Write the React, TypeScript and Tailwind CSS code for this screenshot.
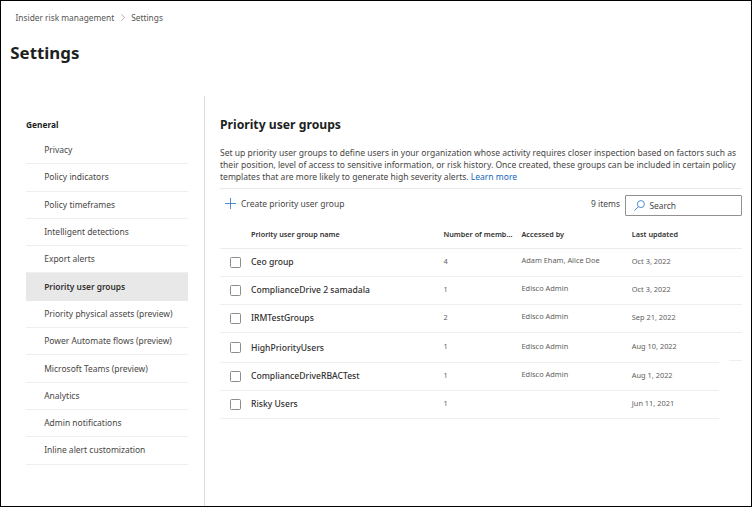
const navItems = [
  "Privacy",
  "Policy indicators",
  "Policy timeframes",
  "Intelligent detections",
  "Export alerts",
  "Priority user groups",
  "Priority physical assets (preview)",
  "Power Automate flows (preview)",
  "Microsoft Teams (preview)",
  "Analytics",
  "Admin notifications",
  "Inline alert customization",
];

type Group = {
  name: string;
  members: number;
  accessedBy: string;
  updated: string;
  size: string;
};

const groups: Group[] = [
  { name: "Ceo group", members: 4, accessedBy: "Adam Eham, Alice Doe", updated: "Oct 3, 2022", size: "h-[28px] w-[522px]" },
  { name: "ComplianceDrive 2 samadala", members: 1, accessedBy: "Edisco Admin", updated: "Oct 3, 2022", size: "h-[28px] w-[522px]" },
  { name: "IRMTestGroups", members: 2, accessedBy: "Edisco Admin", updated: "Sep 21, 2022", size: "h-[28px] w-[522px]" },
  { name: "HighPriorityUsers", members: 1, accessedBy: "Edisco Admin", updated: "Aug 10, 2022", size: "h-[30px] w-[499px] pt-px" },
  { name: "ComplianceDriveRBACTest", members: 1, accessedBy: "Edisco Admin", updated: "Aug 1, 2022", size: "h-[28px] w-[499px]" },
  { name: "Risky Users", members: 1, accessedBy: "", updated: "Jun 11, 2021", size: "h-[28px] w-[499px]" },
];

function Breadcrumb() {
  return (
    <nav className="flex h-3 items-center pl-[14.5px] text-[8.35px] text-[#555453]">
      <span>Insider risk management</span>
      <svg className="mr-[6.5px] mb-px ml-[6.5px] h-[7px] w-1" viewBox="0 0 4 7" fill="none" stroke="#8a8886" strokeWidth="0.7">
        <path d="M0.4 0.3 3.6 3.5 0.4 6.7" />
      </svg>
      <span>Settings</span>
    </nav>
  );
}

function Sidebar() {
  return (
    <aside className="w-[204px] shrink-0 border-r border-[#dcdcdc] pt-[23px] pl-[25px]">
      <div className="h-3 text-[8.35px] leading-3 font-bold text-[#201f1e]">General</div>
      <ul className="mt-[6px] w-[162px]">
        {navItems.map((item) => (
          <li
            key={item}
            className={
              item === "Priority user groups"
                ? "flex h-[27.3px] items-center border-b border-[#e8e8e8] bg-[#e8e8e8] pt-[0.8px] pl-[18.2px] text-[8.35px] font-semibold text-[#323130]"
                : "flex h-[27.3px] items-center border-b border-[#efefef] pt-[0.8px] pl-[18.2px] text-[8.48px] text-[#484644]"
            }
          >
            {item}
          </li>
        ))}
      </ul>
    </aside>
  );
}

function Toolbar() {
  return (
    <div className="flex h-[34px] items-start justify-between border-t border-[#e8e8e8] pt-[6px]">
      <button className="flex h-[18px] items-center gap-[5px] pl-[5px] text-[8.48px] text-[#484644]">
        <svg className="mb-px h-[11px] w-[11px]" viewBox="0 0 11 11" fill="none" stroke="#2b72bd" strokeWidth="0.8">
          <path d="M5.5 0v11M0 5.5h11" />
        </svg>
        Create priority user group
      </button>
      <div className="flex">
        <span className="mr-[5px] h-[18px] text-[8.46px] leading-[18px] text-[#484644]">9 items</span>
        <div className="flex h-[21px] w-[117px] items-center rounded-[1px] border border-[#929090] pl-[7.5px] text-[8.4px] text-[#484644]">
          <svg className="mr-[5px] h-[11px] w-[11px]" viewBox="0 0 11 11" fill="none" stroke="#3b80c8" strokeWidth="0.9">
            <circle cx="6.9" cy="4.1" r="3.5" />
            <path d="M4.4 6.7 0.4 10.6" />
          </svg>
          <span className="pt-[1.5px]">Search</span>
        </div>
      </div>
    </div>
  );
}

function GroupTable() {
  return (
    <div>
      <div className="flex h-[27px] w-[522px] border-b border-[#ebebeb] pl-[31px] text-[7.25px] leading-[24px] font-semibold text-[#323130]">
        <span className="w-[192.5px]">Priority user group name</span>
        <span className="w-[78px]">Number of memb...</span>
        <span className="w-[110.3px]">Accessed by</span>
        <span>Last updated</span>
      </div>
      {groups.map((group) => (
        <div key={group.name} className={`flex items-center border-b border-[#efefef] pl-[10px] text-[7.4px] text-[#605e5c] ${group.size}`}>
          <span className="mr-[10px] mb-px h-[11px] w-[11px] rounded-[1.5px] border border-[#8f8d8b]" />
          <span className="w-[192.5px] text-[8.6px] font-medium text-[#323130]">{group.name}</span>
          <span className="w-[78px] pb-[2px]">{group.members}</span>
          <span className="w-[110.3px] pb-[3px]">{group.accessedBy}</span>
          <span className="pb-[2px]">{group.updated}</span>
        </div>
      ))}
    </div>
  );
}

export default function App() {
  return (
    <div className="flex h-[507px] w-[752px] flex-col overflow-hidden border border-black bg-white pt-[11px] font-['Noto_Sans',sans-serif] whitespace-nowrap">
      <Breadcrumb />
      <h1 className="mt-[17px] h-6 pl-[9.3px] text-[16.85px] leading-6 font-bold text-[#201f1e]">Settings</h1>
      <div className="mt-[31px] flex min-h-0 flex-1">
        <Sidebar />
        <main className="pt-[21px] pl-[15px]">
          <h2 className="h-4 text-[12.19px] leading-4 font-bold text-[#201f1e]">Priority user groups</h2>
          <p className="mt-[14px] h-[41px] text-[8.53px] leading-3 text-[#484644]">
            Set up priority user groups to define users in your organization whose activity requires closer inspection based on factors such as
            <br />
            their position, level of access to sensitive information, or risk history. Once created, these groups can be included in certain policy
            <br />
            templates that are more likely to generate high severity alerts. <a className="text-[#1168bd]">Learn more</a>
          </p>
          <Toolbar />
          <div className="flex w-[522px]">
            <GroupTable />
            <span className="mt-[138px] -ml-[13px] h-px w-[13px] shrink-0 bg-[#efefef]" />
          </div>
        </main>
      </div>
    </div>
  );
}
